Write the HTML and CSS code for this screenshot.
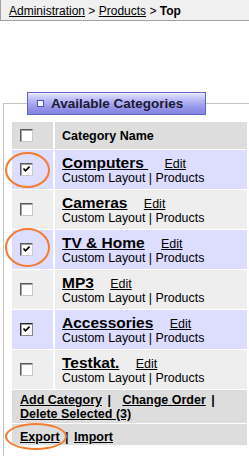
FILE: index.html
```html
<!DOCTYPE html>
<html lang="en">
<head>
    <meta charset="UTF-8">
    <meta name="viewport" content="width=device-width, initial-scale=1.0">
    <title>Products - Top</title>
    <link rel="stylesheet" href="styles.css">
</head>
<body>
    <div class="crumbs">
        <a href="#">Administration</a> &gt; <a href="#">Products</a> &gt; <b>Top</b>
    </div>

    <fieldset class="box">
        <legend class="box-title"><span class="box-icon"></span>Available Categories</legend>
        <table class="cats">
            <thead>
                <tr>
                    <th class="col-check"><span class="check"></span></th>
                    <th class="col-name">Category Name</th>
                </tr>
            </thead>
            <tbody>
                <tr class="row-a">
                    <td class="col-check">
                        <span class="check on"><svg width="11" height="11" viewBox="0 0 11 11"><path d="M2.5 4.5 L4.5 6.8 L8.6 2.6" /></svg></span>
                        <span class="mark mark-row"></span>
                    </td>
                    <td class="col-name">
                        <div class="name-line"><a href="#" class="cat-name">Computers&nbsp;</a> <a href="#" class="edit">Edit</a></div>
                        <div class="sub">Custom Layout | Products</div>
                    </td>
                </tr>
                <tr class="row-b">
                    <td class="col-check"><span class="check"></span></td>
                    <td class="col-name">
                        <div class="name-line"><a href="#" class="cat-name">Cameras</a> <a href="#" class="edit">Edit</a></div>
                        <div class="sub">Custom Layout | Products</div>
                    </td>
                </tr>
                <tr class="row-a">
                    <td class="col-check">
                        <span class="check on"><svg width="11" height="11" viewBox="0 0 11 11"><path d="M2.5 4.5 L4.5 6.8 L8.6 2.6" /></svg></span>
                        <span class="mark mark-row mark-tall"></span>
                    </td>
                    <td class="col-name">
                        <div class="name-line"><a href="#" class="cat-name">TV &amp; Home</a> <a href="#" class="edit">Edit</a></div>
                        <div class="sub">Custom Layout | Products</div>
                    </td>
                </tr>
                <tr class="row-b">
                    <td class="col-check"><span class="check"></span></td>
                    <td class="col-name">
                        <div class="name-line"><a href="#" class="cat-name">MP3</a> <a href="#" class="edit">Edit</a></div>
                        <div class="sub">Custom Layout | Products</div>
                    </td>
                </tr>
                <tr class="row-a">
                    <td class="col-check">
                        <span class="check on focus"><svg width="11" height="11" viewBox="0 0 11 11"><path d="M2.5 4.5 L4.5 6.8 L8.6 2.6" /></svg></span>
                    </td>
                    <td class="col-name">
                        <div class="name-line"><a href="#" class="cat-name">Accessories</a> <a href="#" class="edit">Edit</a></div>
                        <div class="sub">Custom Layout | Products</div>
                    </td>
                </tr>
                <tr class="row-b">
                    <td class="col-check"><span class="check"></span></td>
                    <td class="col-name">
                        <div class="name-line"><a href="#" class="cat-name">Testkat.</a> <a href="#" class="edit">Edit</a></div>
                        <div class="sub">Custom Layout | Products</div>
                    </td>
                </tr>
            </tbody>
            <tfoot>
                <tr>
                    <td colspan="2" class="actions">
                        <a href="#">Add Category</a> <span class="sep">|</span> <a href="#">Change Order</a> <span class="sep">|</span> <a href="#">Delete Selected (3)</a>
                    </td>
                </tr>
                <tr>
                    <td colspan="2" class="actions actions-io">
                        <a href="#">Export</a> <span class="sep-io">|</span> <a href="#">Import</a>
                        <span class="mark mark-export"></span>
                    </td>
                </tr>
            </tfoot>
        </table>
    </fieldset>
</body>
</html>
```

FILE: styles.css
```css
html {
    overflow: hidden;
}
body {
    margin: 0;
    font-family: "Liberation Sans", Arial, sans-serif;
    font-size: 12px;
    color: #000;
    background-color: #fff;
}
a {
    color: #000;
}

/* breadcrumb bar */
.crumbs {
    height: 17px;
    padding: 3px 0 0 8px;
    line-height: 17px;
    background-color: #f0f0f0;
    border-left: 1px solid #a0a0a0;
    border-bottom: 1px solid #a0a0a0;
}

/* category box */
.box {
    margin: 71px 0 0 3px;
    padding: 7px 2px 30px 8px;
    border: 1px solid #c4c4c4;
    border-right: none;
    min-width: 0;
}
.box-title {
    margin-left: 15px;
    padding: 0 22px 0 9px;
    height: 21px;
    line-height: 21px;
    font-size: 13.5px;
    font-weight: bold;
    color: #1a1a33;
    border: 1px solid #6464c8;
    background: linear-gradient(to bottom, #e4e4ff 0%, #b8b8f6 35%, #9696ea 70%, #8282e2 100%);
    box-shadow: inset 0 1px 0 #f0f0ff;
}
.box-icon {
    display: inline-block;
    width: 5px;
    height: 5px;
    margin-right: 7px;
    vertical-align: 1px;
    border: 1px solid #5252b4;
    background-color: #f4f4ff;
}

/* table */
.cats {
    width: 235px;
    border-collapse: separate;
    border-spacing: 0;
    table-layout: fixed;
}
.cats th,
.cats td {
    padding: 0;
    text-align: left;
    vertical-align: middle;
    border-bottom: 1px solid #fff;
}
.cats th {
    height: 27px;
    background-color: #dddddd;
    font-size: 12.5px;
    font-weight: bold;
}
.col-check {
    width: 33px;
    padding-left: 8px !important;
    border-right: 2px solid #fff;
    position: relative;
}
.col-name {
    padding-left: 7px !important;
}
.cats tbody td {
    height: 39px;
}
.row-a td {
    background-color: #ddddff;
}
.row-b td {
    background-color: #eeeeee;
}

.check {
    display: block;
    width: 11px;
    height: 11px;
    border: 1px solid;
    border-color: #5a5a5a #c8c8c8 #c8c8c8 #5a5a5a;
    box-shadow: inset 1px 1px 0 #a0a0a0;
    background-color: #fff;
}
.check svg {
    display: block;
}
.check path {
    fill: none;
    stroke: #000;
    stroke-width: 1.7;
}
.check.focus {
    border-color: #222 #888 #888 #222;
}

.name-line {
    font-size: 15.5px;
    line-height: 16px;
}
.cat-name {
    font-weight: bold;
}
.edit {
    margin-left: 12px;
    font-size: 12.5px;
    line-height: 12px;
}
.sub {
    font-size: 12.4px;
    line-height: 14px;
}

/* footer links */
.actions {
    padding: 3px 8px 2px 8px !important;
    background-color: #dddddd;
    font-size: 12.5px;
    font-weight: bold;
    line-height: 14px;
    position: relative;
}
.actions-io {
    padding: 6px 8px 1px 8px !important;
}
.sep {
    margin: 0 8px 0 2px;
}
.sep-io {
    margin: 0 2px 0 2px;
}

/* orange hand-drawn highlights */
.mark {
    position: absolute;
    border: 2px solid #f47c30;
    border-radius: 50%;
}
.mark-row {
    left: -7px;
    top: 2px;
    width: 41px;
    height: 32px;
}
.mark-tall {
    top: -2px;
    height: 35px;
}
.mark-export {
    left: -7px;
    top: -1px;
    width: 58px;
    height: 23px;
}
```
